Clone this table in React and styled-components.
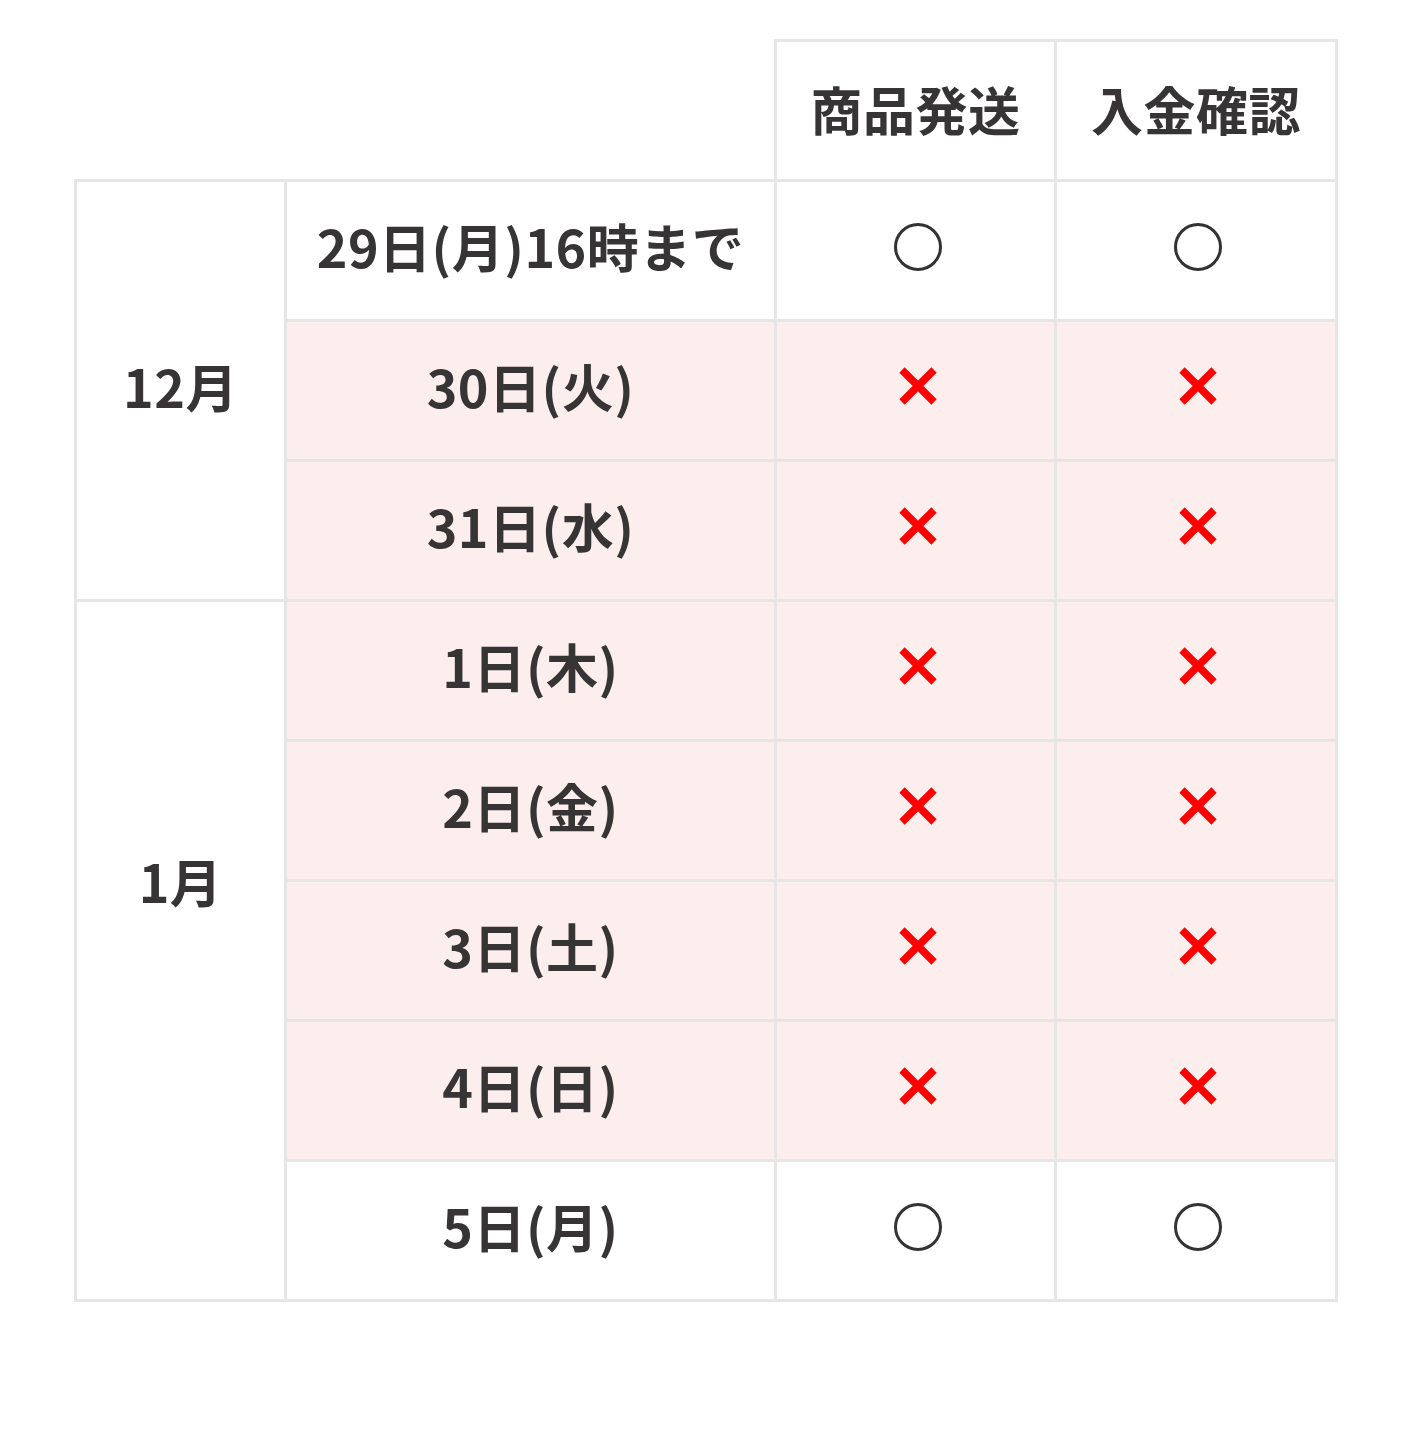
import React from "react";
import styled, { createGlobalStyle } from "styled-components";

const Global = createGlobalStyle`
  html, body { margin: 0; padding: 0; background: #fff; }
  body { font-family: "Noto Sans CJK JP", "Noto Sans", sans-serif; color: #333; }
`;

const Page = styled.div`
  padding: 39px 0 0 74px;
`;

const Table = styled.table`
  border-collapse: collapse;
  table-layout: fixed;
  width: 1264px;
`;

const Cell = styled.td`
  border: 3px solid #e6e6e6;
  height: 137px;
  padding: 0;
  text-align: center;
  vertical-align: middle;
  font-size: 52px;
  font-weight: 700;
  line-height: 1;
  color: #363434;
  background: ${(p) => (p.$closed ? "#fdeeee" : "#fff")};
`;

const Blank = styled.td`
  border: none;
  border-bottom: 3px solid #e6e6e6;
  padding: 0;
`;

const Content = styled.span`
  display: inline-block;
  padding-bottom: ${(p) => p.$lift ?? 10}px;
  letter-spacing: 0.5px;
`;

const Mark = styled.span`
  display: inline-flex;
  align-items: center;
  justify-content: center;
  margin-left: 4px;
  padding-bottom: ${(p) => p.$lift}px;
`;

const Circle = styled.span`
  display: block;
  width: 42px;
  height: 42px;
  border: 3px solid #333;
  border-radius: 50%;
`;

const Cross = () => (
  <svg width="40" height="38" viewBox="0 0 40 38" style={{ display: "block" }}>
    <path d="M4 3 L36 35 M36 3 L4 35" stroke="#ff0000" strokeWidth="7.5" strokeLinecap="butt" />
  </svg>
);

const rows = [
  { month: "12月", span: 3, lift: 10, day: "29日(月)16時まで", ok: true },
  { day: "30日(火)", ok: false },
  { day: "31日(水)", ok: false },
  { month: "1月", span: 5, lift: 140, day: "1日(木)", ok: false },
  { day: "2日(金)", ok: false },
  { day: "3日(土)", ok: false },
  { day: "4日(日)", ok: false },
  { day: "5日(月)", ok: true },
];

export default function App() {
  return (
    <Page>
      <Global />
      <Table>
        <colgroup>
          <col style={{ width: 210 }} />
          <col style={{ width: 490 }} />
          <col style={{ width: 280 }} />
          <col style={{ width: 281 }} />
        </colgroup>
        <thead>
          <tr>
            <Blank colSpan={2} />
            <Cell as="th"><Content $lift={4}>商品発送</Content></Cell>
            <Cell as="th"><Content $lift={4}>入金確認</Content></Cell>
          </tr>
        </thead>
        <tbody>
          {rows.map((r, i) => (
            <tr key={i}>
              {r.month && (
                <Cell rowSpan={r.span}><Content $lift={r.lift}>{r.month}</Content></Cell>
              )}
              <Cell $closed={!r.ok}><Content>{r.day}</Content></Cell>
              {[0, 1].map((k) => (
                <Cell key={k} $closed={!r.ok}>
                  {r.ok ? (
                    <Mark $lift={8}><Circle /></Mark>
                  ) : (
                    <Mark $lift={20}><Cross /></Mark>
                  )}
                </Cell>
              ))}
            </tr>
          ))}
        </tbody>
      </Table>
    </Page>
  );
}
